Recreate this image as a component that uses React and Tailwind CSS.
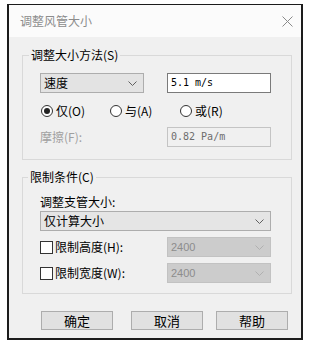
const Chevron = ({ color = "#606060" }) => (
  <svg width="9" height="5" viewBox="0 0 9 5" className="shrink-0">
    <polyline points="0.5,0.5 4.5,4.5 8.5,0.5" fill="none" stroke={color} strokeWidth="1" />
  </svg>
);

const Radio = ({ checked }) => (
  <span className="w-[12px] h-[12px] rounded-full border border-[#333333] bg-white flex items-center justify-center shrink-0">
    {checked && <span className="w-[6px] h-[6px] rounded-full bg-[#222222]" />}
  </span>
);

const Check = () => (
  <span className="w-[13px] h-[13px] border border-[#333333] bg-white shrink-0" />
);

export default function App() {
  return (
    <div className="w-[310px] h-[349px] bg-white pt-[4px] pl-[7px] font-['Noto_Sans_CJK_SC','Noto_Sans',sans-serif] text-[12px] text-black">
      <div className="w-[296px] h-[336px] border-t border-l-2 border-r-2 border-b-2 border-[#1c1c1c] bg-[#f0f0f0] flex flex-col">
        <div className="h-[32px] shrink-0 bg-[#fbfbfb] flex items-center justify-between pl-[11px] pr-[8px]">
          <span className="text-[#8c8c8c] text-[12px] leading-none">调整风管大小</span>
          <svg width="11" height="11" viewBox="0 0 11 11">
            <path d="M0.5 0.5 L10.5 10.5 M10.5 0.5 L0.5 10.5" stroke="#8a8a8a" strokeWidth="1" fill="none" />
          </svg>
        </div>
        <div className="pl-[13px] pr-[10px]">
          <fieldset className="mt-[10px] border border-[#d9d9d9] pl-[17px] pr-[20px] pt-[10px] pb-[12px]">
            <legend className="-ml-[11px] px-[2px] leading-[16px] text-[12px]">调整大小方法(S)</legend>
            <div className="flex items-center">
              <div className="w-[104px] h-[20px] bg-[#e3e3e3] border border-[#adadad] flex items-center justify-between pl-[3px] pr-[6px]">
                <span className="leading-none">速度</span>
                <Chevron />
              </div>
              <div className="ml-[23px] w-[104px] h-[20px] bg-white border border-[#7a7a7a] flex items-center pl-[3px] font-['DejaVu_Sans_Mono',monospace] text-[10px] leading-none">
                5.1 m/s
              </div>
            </div>
            <div className="flex items-center mt-[10px] h-[16px] pl-[1px]">
              <div className="w-[69px] flex items-center gap-[3px]">
                <Radio checked />
                <span className="leading-none">仅(O)</span>
              </div>
              <div className="w-[70px] flex items-center gap-[3px]">
                <Radio />
                <span className="leading-none">与(A)</span>
              </div>
              <div className="flex items-center gap-[3px]">
                <Radio />
                <span className="leading-none">或(R)</span>
              </div>
            </div>
            <div className="flex items-center mt-[8px]">
              <span className="w-[127px] text-[#a0a0a0] leading-none">摩擦(F):</span>
              <div className="w-[104px] h-[20px] bg-[#f0f0f0] border border-[#c4c4c4] flex items-center pl-[3px] font-['DejaVu_Sans_Mono',monospace] text-[10px] leading-none text-[#6d6d6d]">
                0.82 Pa/m
              </div>
            </div>
          </fieldset>
          <fieldset className="mt-[9px] border border-[#d9d9d9] pl-[17px] pr-[20px] pt-[9px] pb-[10px]">
            <legend className="-ml-[12px] px-[2px] leading-[16px] text-[12px]">限制条件(C)</legend>
            <div className="leading-[16px]">调整支管大小:</div>
            <div className="mt-[1px] w-[231px] h-[20px] bg-[#e5e5e5] border border-[#adadad] flex items-center justify-between pl-[3px] pr-[6px]">
              <span className="leading-none">仅计算大小</span>
              <Chevron />
            </div>
            <div className="flex items-center mt-[6px]">
              <div className="w-[127px] flex items-center gap-[2px]">
                <Check />
                <span className="leading-none">限制高度(H):</span>
              </div>
              <div className="w-[104px] h-[20px] bg-[#cccccc] border border-[#c2c2c2] flex items-center justify-between pl-[3px] pr-[6px]">
                <span className="leading-none text-[#8d8d8d] font-['Liberation_Sans',sans-serif] text-[11px]">2400</span>
                <Chevron color="#b0b0b0" />
              </div>
            </div>
            <div className="flex items-center mt-[6px]">
              <div className="w-[127px] flex items-center gap-[2px]">
                <Check />
                <span className="leading-none">限制宽度(W):</span>
              </div>
              <div className="w-[104px] h-[20px] bg-[#cccccc] border border-[#c2c2c2] flex items-center justify-between pl-[3px] pr-[6px]">
                <span className="leading-none text-[#8d8d8d] font-['Liberation_Sans',sans-serif] text-[11px]">2400</span>
                <Chevron color="#b0b0b0" />
              </div>
            </div>
          </fieldset>
        </div>
        <div className="flex pl-[32px] mt-[17px]">
          <div className="w-[72px] h-[19px] bg-[#e1e1e1] border border-[#adadad] flex items-center justify-center text-[13px] leading-none">确定</div>
          <div className="ml-[18px] w-[72px] h-[19px] bg-[#e1e1e1] border border-[#adadad] flex items-center justify-center text-[13px] leading-none">取消</div>
          <div className="ml-[13px] w-[72px] h-[19px] bg-[#e1e1e1] border border-[#adadad] flex items-center justify-center text-[13px] leading-none">帮助</div>
        </div>
      </div>
    </div>
  );
}
